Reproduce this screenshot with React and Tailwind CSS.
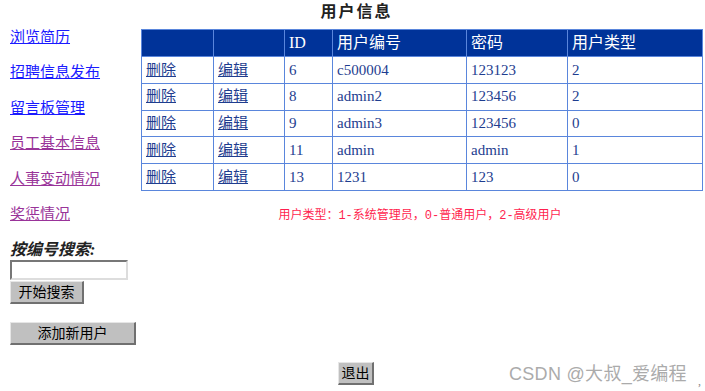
import React from "react";

const navLinks = [
  { label: "浏览简历", visited: false },
  { label: "招聘信息发布", visited: false },
  { label: "留言板管理", visited: false },
  { label: "员工基本信息", visited: true },
  { label: "人事变动情况", visited: true },
  { label: "奖惩情况", visited: true },
];

const users = [
  { id: 6, code: "c500004", pwd: "123123", type: 2 },
  { id: 8, code: "admin2", pwd: "123456", type: 2 },
  { id: 9, code: "admin3", pwd: "123456", type: 0 },
  { id: 11, code: "admin", pwd: "admin", type: 1 },
  { id: 13, code: "1231", pwd: "123", type: 0 },
];

const serif = "font-['Liberation_Serif','Noto_Sans_CJK_SC',serif]";
const sans = "font-['Liberation_Sans','Noto_Sans_CJK_SC',sans-serif]";
const mono = "font-['Liberation_Mono','Noto_Sans_CJK_SC',monospace]";

function OldButton({ children, className = "" }) {
  return (
    <button
      className={`bg-[#c0c0c0] border border-t-[#e6e6e6] border-l-[#e6e6e6] border-r-[#707070] border-b-[#707070] border-r-2 border-b-2 text-[14px] leading-none text-black ${sans} ${className}`}
    >
      {children}
    </button>
  );
}

export default function App() {
  return (
    <div className={`relative w-[705px] h-[391px] bg-white overflow-hidden ${serif}`}>
      <h1 className={`text-center text-[16px] font-bold text-[#222] h-[21px] pt-[3px] leading-[18px] pl-[8px] tracking-[2px] ${sans}`}>
        用户信息
      </h1>

      <div className="flex">
        <div className="w-[141px] pl-[10px] shrink-0 -mt-[2px]">
          <ul>
            {navLinks.map((l) => (
              <li key={l.label} className="h-[35.4px] leading-[35px]">
                <a
                  href="#"
                  className={`text-[15px] underline ${l.visited ? "text-[#993399]" : "text-[#1a1aff]"}`}
                >
                  {l.label}
                </a>
              </li>
            ))}
          </ul>
          <div className="mt-[10px] text-[16px] font-bold italic text-[#222] leading-[18px]">
            按编号搜索:
          </div>
          <input
            type="text"
            className="mt-[1px] block w-[118px] h-[20px] border-2 border-t-[#777] border-l-[#777] border-r-[#ddd] border-b-[#ddd] bg-white"
          />
          <OldButton className="mt-[1px] block w-[74px] h-[23px]">开始搜索</OldButton>
          <OldButton className="mt-[18px] block w-[126px] h-[23px]">添加新用户</OldButton>
        </div>

        <div className="flex-1 pt-[8px]">
          <table className="table-fixed border-collapse w-[561px] text-[15px] text-[#1e3d8f]">
            <colgroup>
              <col className="w-[72px]" />
              <col className="w-[71px]" />
              <col className="w-[48px]" />
              <col className="w-[134px]" />
              <col className="w-[101px]" />
              <col className="w-[135px]" />
            </colgroup>
            <thead>
              <tr className="bg-[#003399] text-white h-[27px]">
                <th className="border border-[#5a86dc]"></th>
                <th className="border border-[#5a86dc]"></th>
                <th className="border border-[#5a86dc] text-left font-normal pl-[4px] text-[16px]">ID</th>
                <th className="border border-[#5a86dc] text-left font-normal pl-[4px] text-[16px]">用户编号</th>
                <th className="border border-[#5a86dc] text-left font-normal pl-[4px] text-[16px]">密码</th>
                <th className="border border-[#5a86dc] text-left font-normal pl-[4px] text-[16px]">用户类型</th>
              </tr>
            </thead>
            <tbody>
              {users.map((u) => (
                <tr key={u.id} className="h-[26.8px]">
                  <td className="border border-[#5a86dc] pl-[4px]">
                    <a href="#" className="underline text-[#1e3d8f]">删除</a>
                  </td>
                  <td className="border border-[#5a86dc] pl-[4px]">
                    <a href="#" className="underline text-[#1e3d8f]">编辑</a>
                  </td>
                  <td className="border border-[#5a86dc] pl-[4px]">{u.id}</td>
                  <td className="border border-[#5a86dc] pl-[4px]">{u.code}</td>
                  <td className="border border-[#5a86dc] pl-[4px]">{u.pwd}</td>
                  <td className="border border-[#5a86dc] pl-[4px]">{u.type}</td>
                </tr>
              ))}
            </tbody>
          </table>
          <p className={`mt-[16px] text-center text-[12px] text-[#ff1f4f] w-[561px] pr-[3px] ${mono}`}>
            用户类型：1-系统管理员，0-普通用户，2-高级用户
          </p>
        </div>
      </div>

      <div className="flex justify-center pl-[7px] mt-[17px]">
        <OldButton className="w-[36px] h-[23px]">退出</OldButton>
      </div>

      <div className={`absolute left-[509px] top-[361px] text-[18px] tracking-[0.3px] text-[#ababab] ${sans}`}>
        CSDN @大叔_爱编程
      </div>
      <div className="absolute left-[698px] top-[372px] text-[12px] text-[#888]">,</div>
    </div>
  );
}
